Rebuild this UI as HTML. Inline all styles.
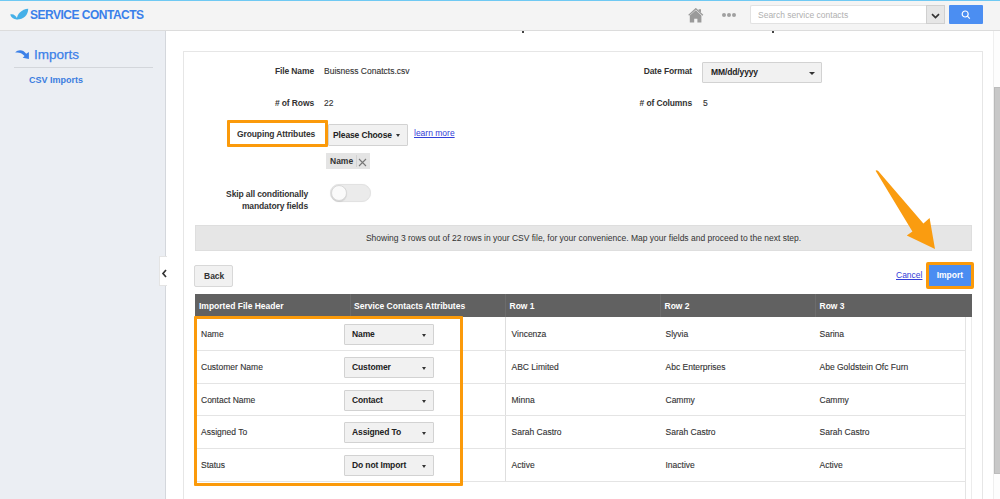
<!DOCTYPE html>
<html><head><meta charset="utf-8">
<style>
*{box-sizing:border-box;margin:0;padding:0}
html,body{width:1000px;height:499px;overflow:hidden;background:#fff;font-family:"Liberation Sans",sans-serif;color:#333}
.td,.val{-webkit-text-stroke:0.12px currentColor}
.abs{position:absolute}
#topline{left:0;top:0;width:1000px;height:1px;background:#6fc9f3}
#header{left:0;top:1px;width:1000px;height:30px;background:#f4f4f4;border-bottom:1px solid #dcdcdc}
#brand{left:30px;top:8px;font-size:12px;font-weight:bold;color:#3a80ea;letter-spacing:-0.5px}
#sidebar{left:0;top:31px;width:166px;height:468px;background:#ebeef3;border-right:1px solid #d4d7dc}
#main{left:166px;top:31px;width:828px;height:468px;background:#fff}
#scroll{left:993px;top:31px;width:7px;height:468px;background:#fdfdfd;border-left:1px solid #efefef}
#thumb{left:994px;top:87px;width:6px;height:387px;background:#c8c8c8;border-left:1px solid #b9b9b9;border-top:1px solid #bdbdbd;border-bottom:1px solid #bdbdbd}
#panel{left:183px;top:51px;width:800px;height:460px;border:1px solid #e6e6e6;background:#fff}
.lbl{font-size:8.5px;font-weight:bold;color:#333;text-align:right;position:absolute;letter-spacing:-0.12px}
.val{font-size:8.5px;color:#333;position:absolute}
.sel{position:absolute;background:#f1f1f1;border:1px solid #d2d2d2;border-radius:1px;font-size:8.5px;font-weight:bold;color:#222;letter-spacing:-0.12px}
.caret{position:absolute;width:0;height:0;border-left:2.5px solid transparent;border-right:2.5px solid transparent;border-top:3px solid #333}
.link{position:absolute;font-size:8.5px;color:#3340d8;text-decoration:underline;text-underline-offset:0.5px}
.th{position:absolute;font-size:8.5px;font-weight:bold;color:#fff}
.td{position:absolute;font-size:8.5px;color:#333}
</style></head><body>
<div id="topline" class="abs"></div>
<div id="header" class="abs"></div>
<svg class="abs" style="left:8px;top:4px" width="24" height="20" viewBox="0 0 24 20">
<path d="M2.2 10.6 C4.5 9.4 7.5 10.6 9.3 14.8 L9.3 15.4 C5.8 15.6 3 13.6 2.2 10.6 Z" fill="#45b0e8"/>
<path d="M8.8 15.5 C8.8 9.8 13.8 5.2 20.2 4.7 C20.2 11 15.5 15.6 8.8 15.5 Z" fill="#45b0e8"/>
</svg>
<div id="brand" class="abs">SERVICE CONTACTS</div>

<!-- header right -->
<svg class="abs" style="left:688px;top:8px" width="16" height="15" viewBox="0 0 16 15">
<path d="M0.7 7.3 L7.8 0.7 L14.9 7.3" fill="none" stroke="#9a9a9a" stroke-width="1.2"/>
<path d="M10.6 1.2 H13 V4.6 L10.6 2.4Z" fill="#9a9a9a"/>
<path d="M1.8 7.6 L7.8 2.3 L13.4 7.6 V14.4 H9.4 V10.8 H6.2 V14.4 H1.8Z" fill="#9a9a9a"/>
</svg>
<div class="abs" style="left:722px;top:13px;width:4px;height:4px;border-radius:50%;background:#a0a0a0"></div>
<div class="abs" style="left:727px;top:13px;width:4px;height:4px;border-radius:50%;background:#a0a0a0"></div>
<div class="abs" style="left:732px;top:13px;width:4px;height:4px;border-radius:50%;background:#a0a0a0"></div>
<div class="abs" style="left:750px;top:5px;width:177px;height:19px;background:#fff;border:1px solid #e2e2e2;border-right:none;border-radius:2px 0 0 2px"></div>
<div class="abs" style="left:758px;top:10px;font-size:8.5px;color:#b0b0b0">Search service contacts</div>
<div class="abs" style="left:926px;top:5px;width:19px;height:19px;background:#e6e6e6;border:1px solid #d0d0d0"></div>
<svg class="abs" style="left:931px;top:12.5px" width="9" height="6" viewBox="0 0 9 6"><path d="M1 1.2 L4.5 4.5 L8 1.2" fill="none" stroke="#333" stroke-width="1.7"/></svg>
<div class="abs" style="left:949px;top:5px;width:34px;height:19px;background:#4b8ef2;border-radius:1px"></div>
<svg class="abs" style="left:961px;top:10px" width="10" height="10" viewBox="0 0 10 10"><circle cx="4.2" cy="4" r="3" fill="none" stroke="#fff" stroke-width="1.2"/><path d="M6.4 6.2 L8.8 8.6" stroke="#fff" stroke-width="1.2"/></svg>

<div id="sidebar" class="abs"></div>
<svg class="abs" style="left:12px;top:44px" width="24" height="20" viewBox="0 0 24 20">
<path d="M3.2 8.6 C6 5.4 11 5.2 14.2 9.8 L16.9 8.1 L16.9 14.9 L10.7 13.8 L12.6 12 C10 9 6.5 8 3.2 8.6 Z" fill="#3b80e8"/>
</svg>
<div class="abs" style="left:34px;top:47px;font-size:13.5px;color:#3b80e8;-webkit-text-stroke:0.25px #3b80e8">Imports</div>
<div class="abs" style="left:14px;top:67px;width:139px;height:1px;background:#d3d6db"></div>
<div class="abs" style="left:29px;top:75px;font-size:9px;font-weight:bold;color:#3b7de0">CSV Imports</div>

<div id="main" class="abs"></div>
<div class="abs" style="left:159px;top:256px;width:8px;height:30px;background:#fff;border:1px solid #e4e4e4;border-right:none"></div>
<svg class="abs" style="left:161px;top:268.5px" width="7" height="9" viewBox="0 0 7 9"><path d="M5 1 L2 4.5 L5 8" fill="none" stroke="#333" stroke-width="1.7"/></svg>
<div id="scroll" class="abs"></div>
<div id="thumb" class="abs"></div>
<div id="panel" class="abs"></div>
<div class="abs" style="left:522px;top:31px;width:2px;height:2px;background:#444"></div>
<div class="abs" style="left:772px;top:31px;width:2px;height:2px;background:#444"></div>

<div class="lbl" style="right:686px;top:66px">File Name</div>
<div class="val" style="left:324px;top:66px">Buisness Conatcts.csv</div>
<div class="lbl" style="right:308px;top:66px">Date Format</div>
<div class="sel" style="left:702px;top:62px;width:120px;height:21px"><span style="position:absolute;left:8px;top:4px">MM/dd/yyyy</span><div class="caret" style="left:105.5px;top:8.5px;border-left-width:3px;border-right-width:3px"></div></div>
<div class="lbl" style="right:686px;top:98px"># of Rows</div>
<div class="val" style="left:324px;top:98px">22</div>
<div class="lbl" style="right:308px;top:98px"># of Columns</div>
<div class="val" style="left:703px;top:98px">5</div>

<div class="abs" style="left:227px;top:120px;width:101px;height:27px;border:3px solid #fb9a0a;border-radius:1px"></div>
<div class="lbl" style="left:237px;top:129px">Grouping Attributes</div>
<div class="sel" style="left:328px;top:124px;width:80px;height:22px"><span style="position:absolute;left:4px;top:5px">Please Choose</span><div class="caret" style="left:66.5px;top:9px"></div></div>
<div class="link" style="left:414px;top:128px">learn more</div>
<div class="abs" style="left:326px;top:153px;width:44px;height:16px;background:#e4e4e4"></div><div class="abs" style="left:356px;top:155px;width:1px;height:12px;background:#d2d2d2"></div>
<div class="abs" style="left:330px;top:156px;font-size:8.5px;font-weight:bold;color:#333">Name</div>
<svg class="abs" style="left:358px;top:158px" width="9" height="9" viewBox="0 0 9 9"><path d="M1 1 L8 8 M8 1 L1 8" stroke="#777" stroke-width="1.1"/></svg>

<div class="lbl" style="right:692px;top:188px;line-height:12px">Skip all conditionally<br>mandatory fields</div>
<div class="abs" style="left:330px;top:184px;width:41px;height:18px;border-radius:9px;background:#ebebeb;border:1px solid #e2e2e2;box-shadow:0 0 1px rgba(0,0,0,0.08)"></div>
<div class="abs" style="left:331px;top:185px;width:16px;height:16px;border-radius:50%;background:#fafafa;border:1px solid #d8d8d8;box-shadow:0 1px 1px rgba(0,0,0,0.1)"></div>

<div class="abs" style="left:195px;top:225px;width:777px;height:26px;background:#e6e6e6;border:1px solid #dedede"></div>
<div class="abs" style="left:195px;top:233px;width:777px;text-align:center;font-size:8.5px;color:#333">Showing 3 rows out of 22 rows in your CSV file, for your convenience. Map your fields and proceed to the next step.</div>

<div class="abs" style="left:194px;top:265px;width:39px;height:22px;background:#f1f1f1;border:1px solid #d8d8d8;border-radius:2px"></div>
<div class="abs" style="left:204px;top:271px;font-size:8.5px;font-weight:bold;color:#333">Back</div>
<div class="link" style="left:896px;top:270px">Cancel</div>
<div class="abs" style="left:926px;top:262px;width:48px;height:27px;border:3px solid #fb9a0a;border-radius:2px;background:#4a8df1"></div>
<div class="abs" style="left:936.7px;top:270px;font-size:8.5px;font-weight:bold;color:#fff">Import</div>

<svg class="abs" style="left:870px;top:165px" width="75" height="90" viewBox="0 0 75 90">
<path d="M5.6 5.8 Q6.5 4.8 8.2 6 L53.4 58.4 L59.6 53 L65 84 L36.8 70.4 L42.4 66.6 Z" fill="#fa9c10"/>
</svg>

<!-- table -->
<div class="abs" style="left:195px;top:294px;width:777px;height:23px;background:#616161"></div>
<div class="abs" style="left:350px;top:294px;width:1px;height:23px;background:#6c6c6c"></div>
<div class="abs" style="left:505px;top:294px;width:1px;height:23px;background:#6c6c6c"></div>
<div class="abs" style="left:660px;top:294px;width:1px;height:23px;background:#6c6c6c"></div>
<div class="abs" style="left:815px;top:294px;width:1px;height:23px;background:#6c6c6c"></div>
<div class="th" style="left:199px;top:301px">Imported File Header</div>
<div class="th" style="left:354px;top:301px">Service Contacts Attributes</div>
<div class="th" style="left:509.5px;top:301px">Row 1</div>
<div class="th" style="left:664.5px;top:301px">Row 2</div>
<div class="th" style="left:819.5px;top:301px">Row 3</div>
<div class="abs" style="left:195px;top:317px;width:1px;height:164.75px;background:#e4e4e4"></div>
<div class="abs" style="left:965px;top:317px;width:1px;height:182px;background:#e4e4e4"></div>
<div class="abs" style="left:971px;top:317px;width:1px;height:182px;background:#ececec"></div>
<div class="abs" style="left:505px;top:317px;width:1px;height:163.75px;background:#dedede"></div>
<div class="abs" style="left:195px;top:349.75px;width:771px;height:1px;background:#e4e4e4"></div>
<div class="td" style="left:201px;top:329.00px">Name</div>
<div class="sel" style="left:344px;top:324.00px;width:90px;height:21px"><span style="position:absolute;left:7px;top:4px">Name</span><div class="caret" style="left:77px;top:9px"></div></div>
<div class="td" style="left:511.5px;top:329.00px">Vincenza</div>
<div class="td" style="left:665.5px;top:329.00px">Slyvia</div>
<div class="td" style="left:819.5px;top:329.00px">Sarina</div>
<div class="abs" style="left:195px;top:382.50px;width:771px;height:1px;background:#e4e4e4"></div>
<div class="td" style="left:201px;top:361.75px">Customer Name</div>
<div class="sel" style="left:344px;top:356.75px;width:90px;height:21px"><span style="position:absolute;left:7px;top:4px">Customer</span><div class="caret" style="left:77px;top:9px"></div></div>
<div class="td" style="left:511.5px;top:361.75px">ABC Limited</div>
<div class="td" style="left:665.5px;top:361.75px">Abc Enterprises</div>
<div class="td" style="left:819.5px;top:361.75px">Abe Goldstein Ofc Furn</div>
<div class="abs" style="left:195px;top:415.25px;width:771px;height:1px;background:#e4e4e4"></div>
<div class="td" style="left:201px;top:394.50px">Contact Name</div>
<div class="sel" style="left:344px;top:389.50px;width:90px;height:21px"><span style="position:absolute;left:7px;top:4px">Contact</span><div class="caret" style="left:77px;top:9px"></div></div>
<div class="td" style="left:511.5px;top:394.50px">Minna</div>
<div class="td" style="left:665.5px;top:394.50px">Cammy</div>
<div class="td" style="left:819.5px;top:394.50px">Cammy</div>
<div class="abs" style="left:195px;top:448.00px;width:771px;height:1px;background:#e4e4e4"></div>
<div class="td" style="left:201px;top:427.25px">Assigned To</div>
<div class="sel" style="left:344px;top:422.25px;width:90px;height:21px"><span style="position:absolute;left:7px;top:4px">Assigned To</span><div class="caret" style="left:77px;top:9px"></div></div>
<div class="td" style="left:511.5px;top:427.25px">Sarah Castro</div>
<div class="td" style="left:665.5px;top:427.25px">Sarah Castro</div>
<div class="td" style="left:819.5px;top:427.25px">Sarah Castro</div>
<div class="abs" style="left:195px;top:480.75px;width:771px;height:1px;background:#e4e4e4"></div>
<div class="td" style="left:201px;top:460.00px">Status</div>
<div class="sel" style="left:344px;top:455.00px;width:90px;height:21px"><span style="position:absolute;left:7px;top:4px">Do not Import</span><div class="caret" style="left:77px;top:9px"></div></div>
<div class="td" style="left:511.5px;top:460.00px">Active</div>
<div class="td" style="left:665.5px;top:460.00px">Inactive</div>
<div class="td" style="left:819.5px;top:460.00px">Active</div>
<div class="abs" style="left:194px;top:316px;width:269px;height:170px;border:3px solid #fb9a0a;border-radius:1px"></div>
</body></html>
